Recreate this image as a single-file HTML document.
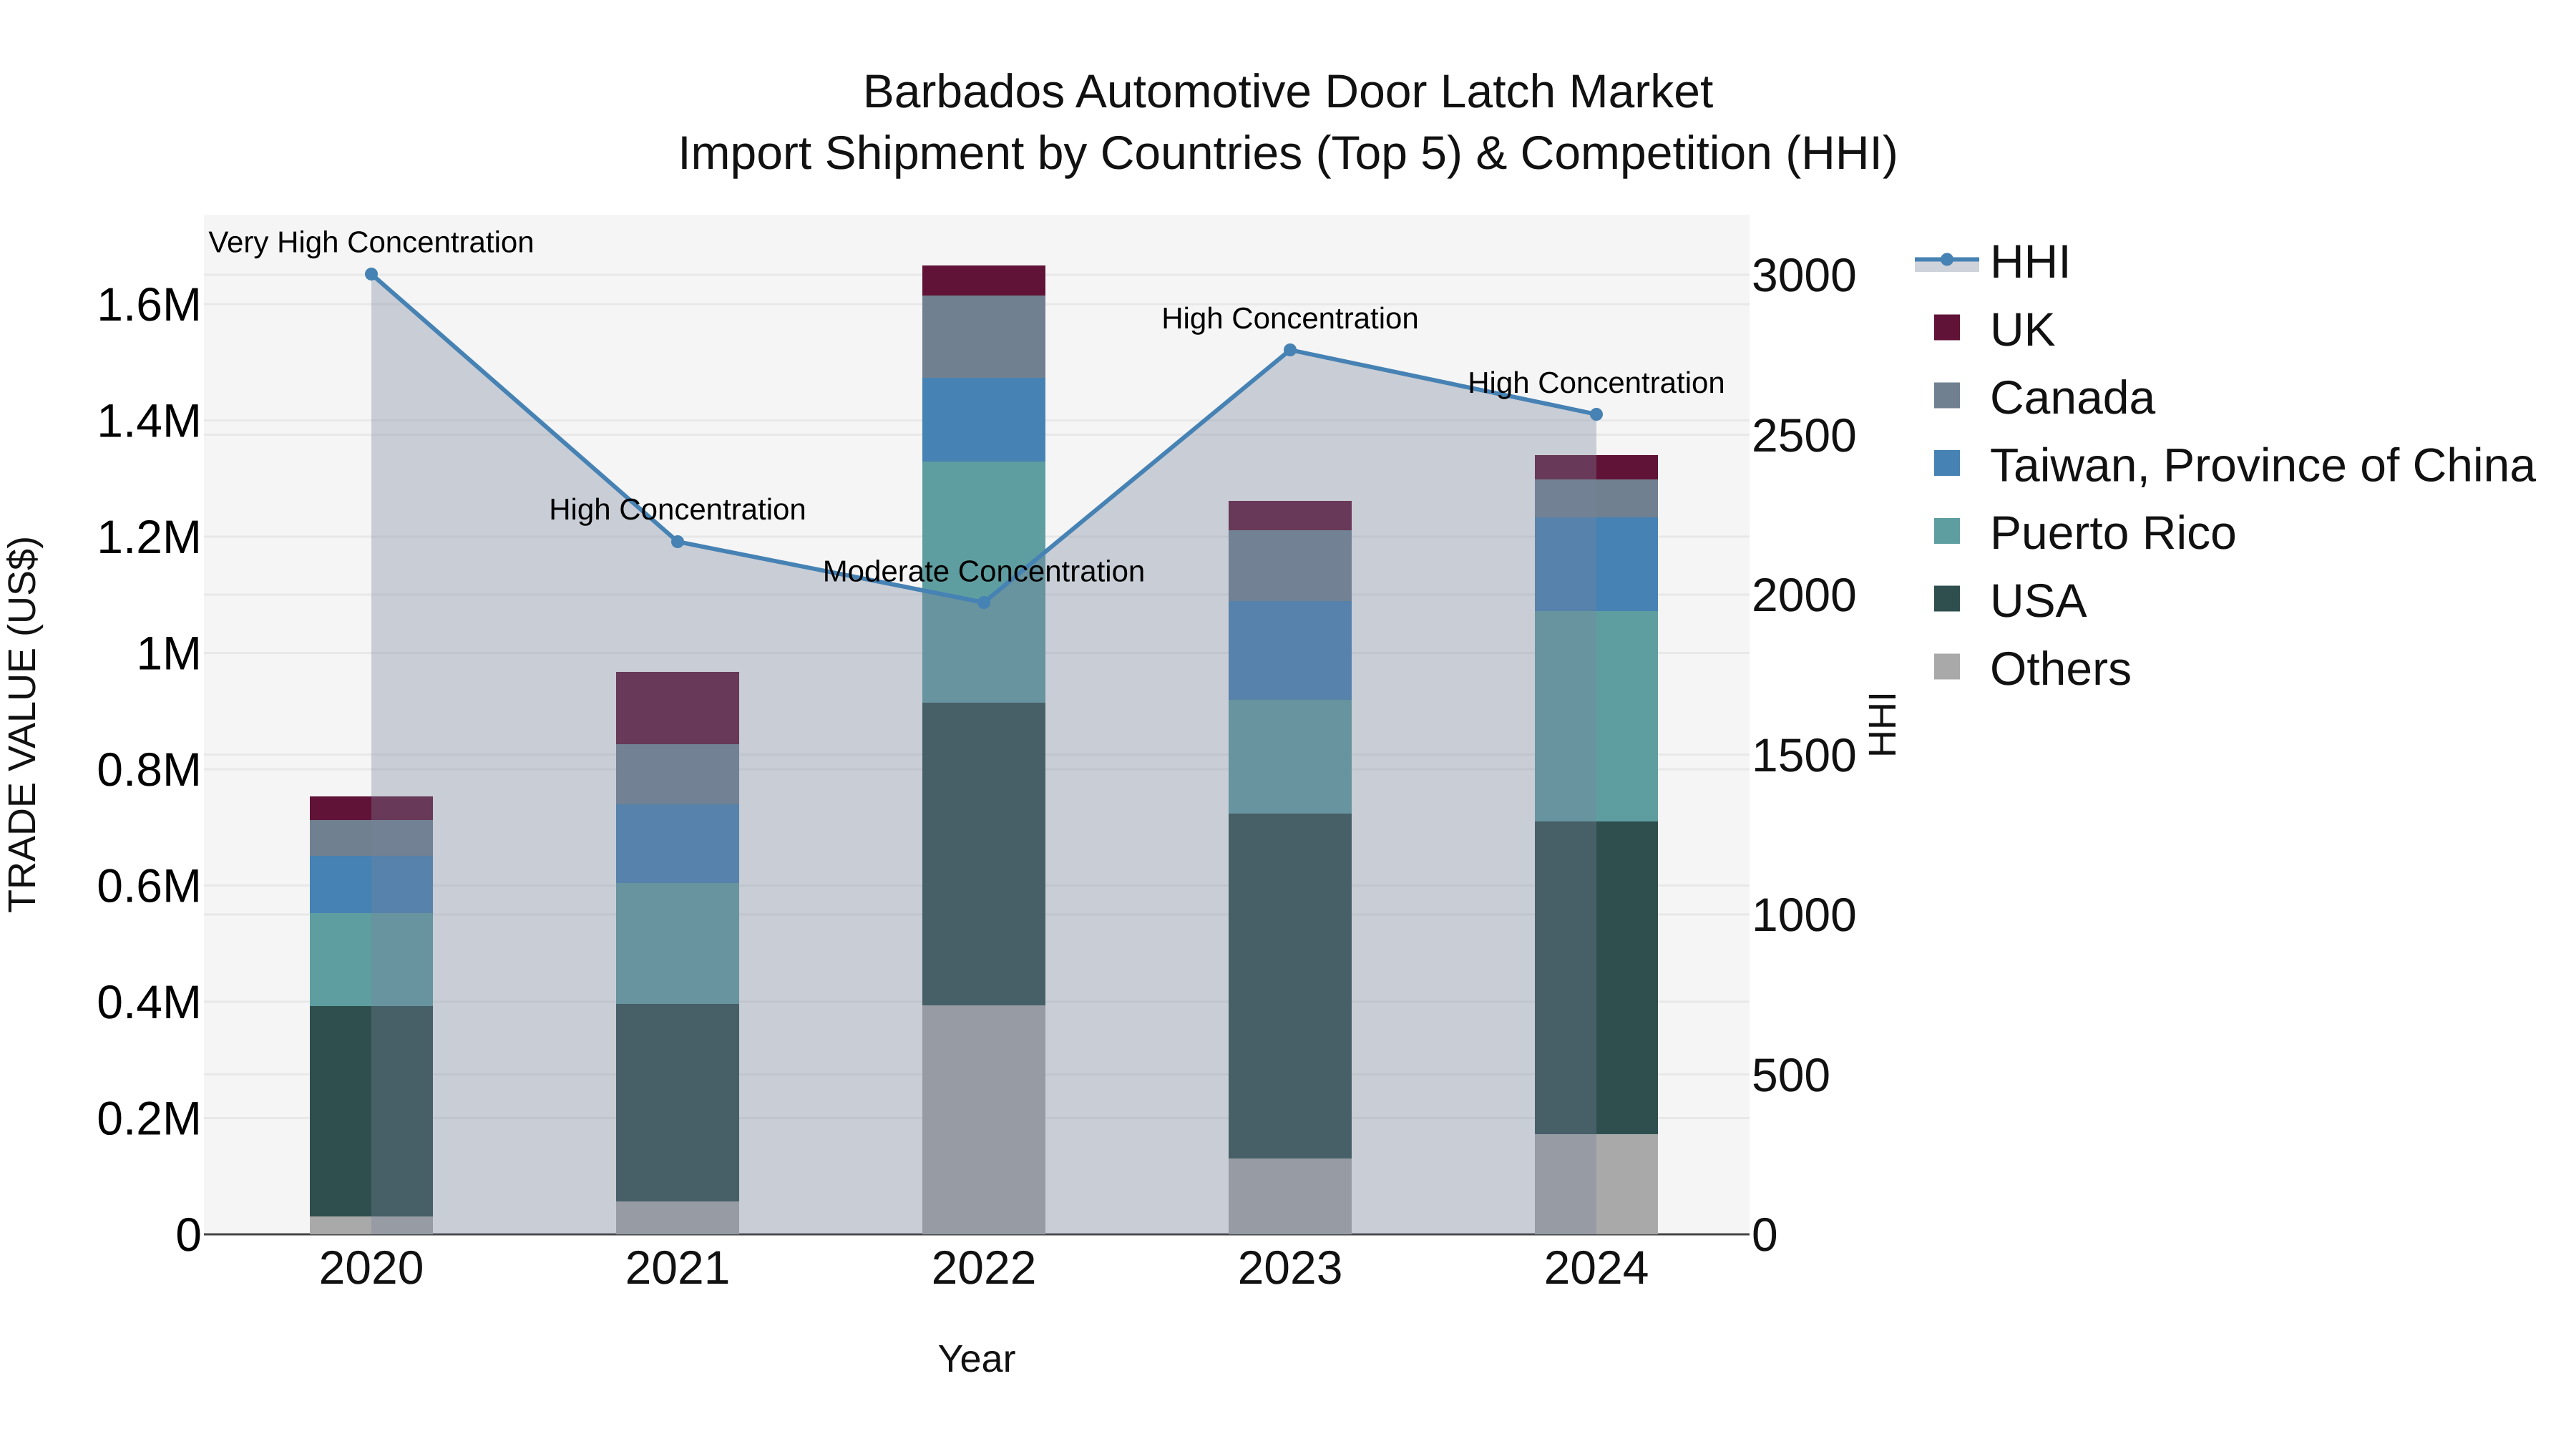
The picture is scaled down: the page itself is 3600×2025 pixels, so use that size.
<!DOCTYPE html>
<html>
<head>
<meta charset="utf-8">
<style>
html,body{margin:0;padding:0;background:#fff;width:3600px;height:2025px;overflow:hidden}
svg{display:block}
text{font-family:"Liberation Sans",sans-serif;text-rendering:geometricPrecision;white-space:pre}
.t{font-size:66px;fill:#111}
.l{font-size:66px;fill:#000;text-anchor:end}
.x{font-size:66px;fill:#111;text-anchor:middle}
.r{font-size:66px;fill:#111}
.a{font-size:42px;fill:#000;text-anchor:middle}
.g{font-size:54px;fill:#111}
</style>
</head>
<body>
<svg width="3600" height="2025" viewBox="0 0 3600 2025" xmlns="http://www.w3.org/2000/svg">
<rect width="3600" height="2025" fill="#fff"/>
<rect x="285" y="300" width="2160" height="1425" fill="#f5f5f5"/>

<!-- gridlines -->
<g stroke="#e8e8e8" stroke-width="3" fill="none">
<path d="M285 1562.5H2445M285 1400H2445M285 1237.5H2445M285 1075H2445M285 912.5H2445M285 750H2445M285 587.5H2445M285 425H2445"/>
<path d="M285 1501.5H2445M285 1278H2445M285 1054.5H2445M285 831H2445M285 607.5H2445M285 384H2445"/>
</g>
<path d="M285 1725H2445" stroke="#444" stroke-width="3" fill="none"/>

<!-- bars: Others, USA, Puerto Rico, Taiwan, Canada, UK -->
<g shape-rendering="crispEdges">
<rect x="433" y="1700" width="172" height="25" fill="#a9a9a9"/>
<rect x="433" y="1406" width="172" height="294" fill="#2f4f4f"/>
<rect x="433" y="1276" width="172" height="130" fill="#5f9ea0"/>
<rect x="433" y="1196" width="172" height="80" fill="#4682b4"/>
<rect x="433" y="1146" width="172" height="50" fill="#708090"/>
<rect x="433" y="1113" width="172" height="33" fill="#601336"/>

<rect x="861" y="1679" width="172" height="46" fill="#a9a9a9"/>
<rect x="861" y="1403" width="172" height="276" fill="#2f4f4f"/>
<rect x="861" y="1234" width="172" height="169" fill="#5f9ea0"/>
<rect x="861" y="1124" width="172" height="110" fill="#4682b4"/>
<rect x="861" y="1040" width="172" height="84" fill="#708090"/>
<rect x="861" y="939" width="172" height="101" fill="#601336"/>

<rect x="1289" y="1405" width="172" height="320" fill="#a9a9a9"/>
<rect x="1289" y="982" width="172" height="423" fill="#2f4f4f"/>
<rect x="1289" y="645" width="172" height="337" fill="#5f9ea0"/>
<rect x="1289" y="528" width="172" height="117" fill="#4682b4"/>
<rect x="1289" y="413" width="172" height="115" fill="#708090"/>
<rect x="1289" y="371" width="172" height="42" fill="#601336"/>

<rect x="1717" y="1619" width="172" height="106" fill="#a9a9a9"/>
<rect x="1717" y="1137" width="172" height="482" fill="#2f4f4f"/>
<rect x="1717" y="978" width="172" height="159" fill="#5f9ea0"/>
<rect x="1717" y="840" width="172" height="138" fill="#4682b4"/>
<rect x="1717" y="741" width="172" height="99" fill="#708090"/>
<rect x="1717" y="700" width="172" height="41" fill="#601336"/>

<rect x="2145" y="1585" width="172" height="140" fill="#a9a9a9"/>
<rect x="2145" y="1148" width="172" height="437" fill="#2f4f4f"/>
<rect x="2145" y="854" width="172" height="294" fill="#5f9ea0"/>
<rect x="2145" y="723" width="172" height="131" fill="#4682b4"/>
<rect x="2145" y="670" width="172" height="53" fill="#708090"/>
<rect x="2145" y="636" width="172" height="34" fill="#601336"/>
</g>

<!-- HHI area -->
<path d="M519 1725L519 383L947 757L1375 842L1803 489L2231 579L2231 1725Z" fill="rgb(120,131,153)" fill-opacity="0.345"/>
<path d="M519 383L947 757L1375 842L1803 489L2231 579" fill="none" stroke="#4682b4" stroke-width="6" stroke-linejoin="round"/>
<g fill="#4682b4">
<circle cx="519" cy="383" r="9"/>
<circle cx="947" cy="757" r="9"/>
<circle cx="1375" cy="842" r="9"/>
<circle cx="1803" cy="489" r="9"/>
<circle cx="2231" cy="579" r="9"/>
</g>

<!-- annotations -->
<text class="a" x="519" y="352.5">Very High Concentration</text>
<text class="a" x="947" y="726">High Concentration</text>
<text class="a" x="1375" y="812.5">Moderate Concentration</text>
<text class="a" x="1803" y="459">High Concentration</text>
<text class="a" x="2231" y="549">High Concentration</text>

<!-- title -->
<text class="t" x="1800" y="150" text-anchor="middle">Barbados Automotive Door Latch Market</text>
<text class="t" x="1800" y="236" text-anchor="middle">Import Shipment by Countries (Top 5) &amp; Competition (HHI)</text>

<!-- left axis -->
<text class="l" x="282" y="1748">0</text>
<text class="l" x="282" y="1585.5">0.2M</text>
<text class="l" x="282" y="1423">0.4M</text>
<text class="l" x="282" y="1260.5">0.6M</text>
<text class="l" x="282" y="1098">0.8M</text>
<text class="l" x="282" y="935.5">1M</text>
<text class="l" x="282" y="773">1.2M</text>
<text class="l" x="282" y="610.5">1.4M</text>
<text class="l" x="282" y="448">1.6M</text>

<!-- right axis -->
<text class="r" x="2448" y="1748">0</text>
<text class="r" x="2448" y="1525">500</text>
<text class="r" x="2448" y="1301">1000</text>
<text class="r" x="2448" y="1078">1500</text>
<text class="r" x="2448" y="854">2000</text>
<text class="r" x="2448" y="631">2500</text>
<text class="r" x="2448" y="407">3000</text>

<!-- x axis -->
<text class="x" x="519" y="1794">2020</text>
<text class="x" x="947" y="1794">2021</text>
<text class="x" x="1375" y="1794">2022</text>
<text class="x" x="1803" y="1794">2023</text>
<text class="x" x="2231" y="1794">2024</text>

<!-- axis titles -->
<text class="g" x="1365" y="1917" text-anchor="middle">Year</text>
<text class="g" text-anchor="middle" transform="translate(49 1012.5) rotate(-90)">TRADE VALUE (US$)</text>
<text class="g" text-anchor="middle" transform="translate(2649 1012.5) rotate(-90)">HHI</text>

<!-- legend -->
<rect x="2676" y="362" width="90" height="18" fill="#ced2da"/>
<path d="M2676 362.5H2766" stroke="#4682b4" stroke-width="6" fill="none"/>
<circle cx="2721" cy="362.5" r="9" fill="#4682b4"/>
<g shape-rendering="crispEdges">
<rect x="2703" y="439.5" width="36" height="36" fill="#601336"/>
<rect x="2703" y="534.3" width="36" height="36" fill="#708090"/>
<rect x="2703" y="629.1" width="36" height="36" fill="#4682b4"/>
<rect x="2703" y="723.9" width="36" height="36" fill="#5f9ea0"/>
<rect x="2703" y="818.7" width="36" height="36" fill="#2f4f4f"/>
<rect x="2703" y="913.5" width="36" height="36" fill="#a9a9a9"/>
</g>
<text class="r" x="2781" y="388">HHI</text>
<text class="r" x="2781" y="483">UK</text>
<text class="r" x="2781" y="578">Canada</text>
<text class="r" x="2781" y="672.5">Taiwan, Province of China</text>
<text class="r" x="2781" y="767">Puerto Rico</text>
<text class="r" x="2781" y="862">USA</text>
<text class="r" x="2781" y="957">Others</text>
</svg>
</body>
</html>
